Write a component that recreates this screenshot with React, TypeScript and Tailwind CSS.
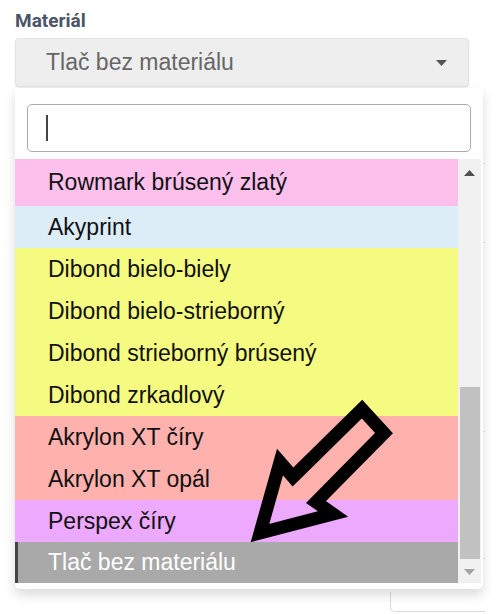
import React from "react";

// Položky zoznamu materiálov s farbou riadku.
const options: { label: string; bg: string; tall?: boolean }[] = [
  { label: "Rowmark brúsený zlatý", bg: "bg-[#fdbfeb]", tall: true },
  { label: "Akyprint", bg: "bg-[#ddedf7]" },
  { label: "Dibond bielo-biely", bg: "bg-[#f5fa80]" },
  { label: "Dibond bielo-strieborný", bg: "bg-[#f5fa80]" },
  { label: "Dibond strieborný brúsený", bg: "bg-[#f5fa80]" },
  { label: "Dibond zrkadlový", bg: "bg-[#f5fa80]" },
  { label: "Akrylon XT číry", bg: "bg-[#ffb1ae]" },
  { label: "Akrylon XT opál", bg: "bg-[#ffb1ae]" },
  { label: "Perspex číry", bg: "bg-[#eda9fd]" },
];

function Caret({ up, className }: { up?: boolean; className: string }) {
  return (
    <svg width="11" height="6" viewBox="0 0 11 6" className={className}>
      <path d={up ? "M0 6 L5.5 0 L11 6 Z" : "M0 0 L11 0 L5.5 6 Z"} fill="currentColor" />
    </svg>
  );
}

export default function App() {
  return (
    <div className="relative h-[614px] w-[500px] overflow-hidden bg-white font-['Liberation_Sans',Arial,sans-serif]">
      <div className="px-[15px] pt-[9px]">
        <label className="block h-[24px] font-['Roboto',sans-serif] text-[19px] font-bold leading-[24px] text-[#4a5568]">
          Materiál
        </label>
        <div className="mt-[5px] flex h-[49px] w-[454px] items-center justify-between rounded-[4px] border border-[#e3e3e3] bg-[#eeeeee] pl-[30px] pr-[21px] shadow-[0_1px_2px_rgba(0,0,0,0.08)]">
          <span className="text-[23px] text-[#666]">Tlač bez materiálu</span>
          <Caret className="text-[#555]" />
        </div>

        {/* zvyšok formulára pod rozbaleným zoznamom */}
        <div className="ml-[375px] mt-[76px] h-[80px] border-y border-[#e2e2e2]" />
        <div className="ml-[375px] mt-[188px] h-[128px] border-y border-[#e2e2e2]" />
        <div className="ml-[375px] mt-[33px] h-[20px] rounded-bl-[5px] border-b border-l border-[#dadada]" />
      </div>

      {/* rozbalený zoznam */}
      <div className="absolute left-[15px] top-[88px] w-[468px] rounded-b-[5px] bg-white pb-[6px] pt-[16px] shadow-[0_6px_12px_rgba(0,0,0,0.14)]">
        <div className="px-[12px]">
          <div className="flex h-[48px] items-center rounded-[5px] border border-[#aaa] pl-[18px]">
            <span className="h-[26px] w-[2px] bg-[#444]" />
          </div>
        </div>
        <div className="mt-[7px] flex">
          <ul className="w-[443px]">
            {options.map((o) => (
              <li
                key={o.label}
                className={`flex items-center pl-[33px] text-[23px] text-[#111] ${o.bg} ${o.tall ? "h-[47px]" : "h-[42px]"}`}
              >
                {o.label}
              </li>
            ))}
            <li className="flex h-[41px] items-center border-l-[3px] border-[#444] bg-[#a9a9a9] pl-[30px] text-[23px] text-white">
              Tlač bez materiálu
            </li>
          </ul>
          <div className="flex w-[23px] flex-col items-center bg-[#f1f1f1]">
            <Caret up className="mt-[11px] text-[#505050]" />
            <div className="mt-[211px] h-[172px] w-[20px] bg-[#c1c1c1]" />
            <Caret className="mt-[10px] text-[#a3a3a3]" />
          </div>
        </div>
      </div>

      {/* šípka */}
      <svg className="pointer-events-none absolute left-0 top-0" width="500" height="614" viewBox="0 0 500 614">
        <polygon
          points="260,533 280,462 293,477 362,409 384,433 316,502 333,514"
          fill="none"
          stroke="#000"
          strokeWidth="13"
          strokeLinejoin="miter"
          strokeMiterlimit="10"
        />
      </svg>
    </div>
  );
}
